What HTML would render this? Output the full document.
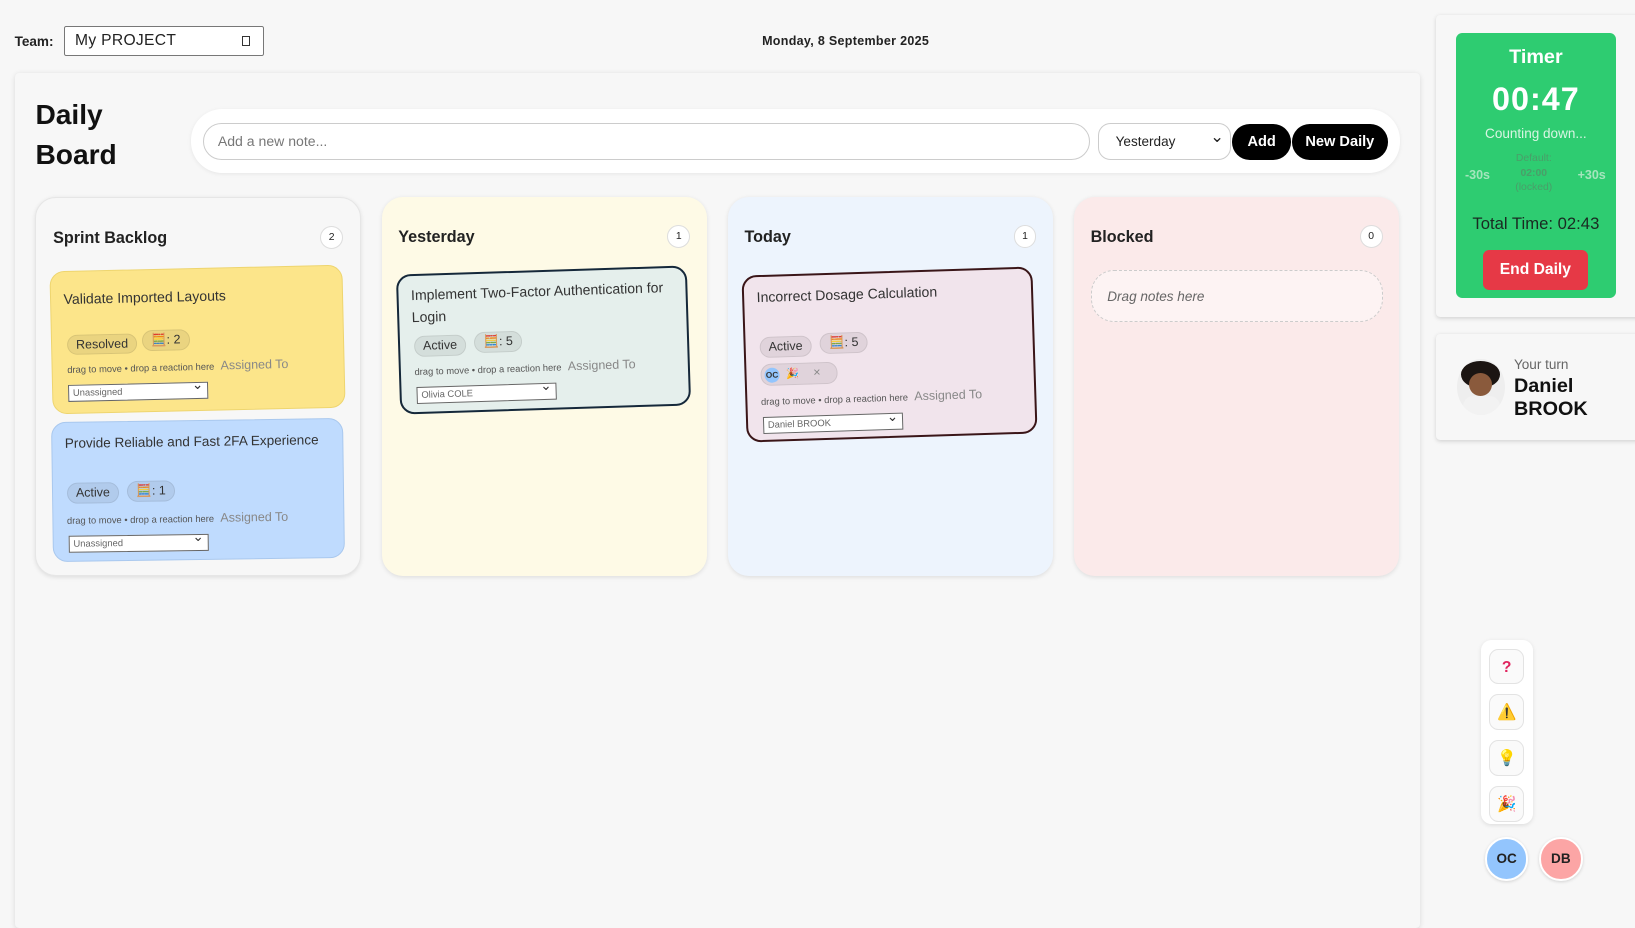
<!DOCTYPE html>
<html><head><meta charset="utf-8">
<style>
html{zoom:1.0427}
body{margin:0;width:1568px;height:859px;background:#f7f7f7;font-family:"Liberation Sans","DejaVu Sans",sans-serif;color:#222;position:relative;overflow:hidden}
.a{position:absolute}
.sel{background:#fff;border:1px solid #777;box-sizing:border-box}
.col{position:absolute;top:189px;width:312px;height:363px;border-radius:20px;box-shadow:0 1px 4px rgba(0,0,0,.1);box-sizing:border-box}
.ch{position:absolute;top:30px;left:16px;font-size:15.5px;font-weight:bold;color:#222}
.cnt{position:absolute;top:27px;right:16px;width:22px;height:22px;border-radius:50%;background:#fff;border:1px solid #ddd;font-size:10px;text-align:center;line-height:21px;box-sizing:border-box}
.card{position:absolute;border-radius:14px;box-sizing:border-box;font-size:13.5px;color:#333}
.card .t{position:absolute;left:12px;top:16px;right:10px;line-height:21px}
.chip{position:absolute;height:20px;border-radius:10px;background:rgba(0,0,0,.07);border:1px solid rgba(0,0,0,.08);font-size:12px;line-height:19px;padding:0 8px;box-sizing:border-box;color:#333}
.hint{position:absolute;font-size:9px;color:#555;white-space:nowrap}
.hint span{font-size:12px;color:#888;margin-left:6px}
.cs{position:absolute;height:17px;background:#fff;border:1px solid #666;font-size:9px;color:#666;line-height:15px;padding-left:4px;box-sizing:border-box}
.cs:after{content:"⌄";position:absolute;right:4px;top:-5px;font-size:13px;color:#333}
.rb{position:absolute;left:8px;width:34px;height:34px;border:1px solid #e3e3e3;border-radius:9px;background:#fafafa;text-align:center;line-height:34px;font-size:15px;box-sizing:border-box}
</style></head><body>
<div class="a" style="left:14px;top:33px;font-size:13px;font-weight:bold">Team:</div>
<div class="a sel" style="left:61px;top:25px;width:192px;height:29px;border-radius:2px;font-size:15px;padding:5px 10px;letter-spacing:.3px">My PROJECT<span class="a" style="right:12px;top:9px;width:6px;height:7px;border:1px solid #333"></span></div>
<div class="a" style="left:700px;top:33px;width:222px;text-align:center;font-size:12px;font-weight:bold;letter-spacing:.3px">Monday, 8 September 2025</div>

<div class="a" style="left:14px;top:70px;width:1348px;height:820px;background:#f7f7f7;box-shadow:0 1px 5px rgba(0,0,0,.12);border-radius:4px"></div>
<div class="a" style="left:34px;top:91px;font-size:27px;font-weight:bold;line-height:38px;color:#111">Daily<br>Board</div>
<div class="a" style="left:183px;top:105px;width:1160px;height:61px;background:#fff;border-radius:30px;box-shadow:0 1px 4px rgba(0,0,0,.07)"></div>
<div class="a" style="left:195px;top:118px;width:850px;height:35px;border:1px solid #ccc;border-radius:18px;box-sizing:border-box;font-size:13.5px;color:#777;padding:9px 13px">Add a new note...</div>
<div class="a" style="left:1053px;top:118px;width:128px;height:35px;border:1px solid #ccc;border-radius:12px;box-sizing:border-box;font-size:13px;color:#222;padding:10px 16px">Yesterday<span class="a" style="right:6px;top:3px;font-size:16px">⌄</span></div>
<div class="a" style="left:1182px;top:119px;width:56px;height:34px;background:#000;color:#fff;border-radius:17px;font-size:14px;font-weight:bold;text-align:center;line-height:35px">Add</div>
<div class="a" style="left:1239px;top:119px;width:92px;height:34px;background:#000;color:#fff;border-radius:17px;font-size:14px;font-weight:bold;text-align:center;line-height:35px">New Daily</div>

<div class="col" style="left:34px;background:#f7f7f7;border:1px solid #e6e6e6"><div class="ch">Sprint Backlog</div><div class="cnt">2</div></div>
<div class="col" style="left:366px;background:#fefae6"><div class="ch">Yesterday</div><div class="cnt">1</div></div>
<div class="col" style="left:698px;background:#edf4fd"><div class="ch">Today</div><div class="cnt">1</div></div>
<div class="col" style="left:1030px;background:#fbeaea"><div class="ch">Blocked</div><div class="cnt">0</div>
<div class="a" style="left:16px;top:70px;width:280px;height:50px;border:1px dashed #ccc;border-radius:22px;background:#fdf3f3;box-sizing:border-box;font-size:13px;font-style:italic;color:#666;padding:17px 15px">Drag notes here</div></div>

<div class="card" style="left:49px;top:257px;width:281px;height:137px;background:#fce58a;border:1px solid #eed56f;transform:rotate(-1.3deg)">
<div class="t">Validate Imported Layouts</div>
<div class="chip" style="left:14px;top:60px">Resolved</div><div class="chip" style="left:86px;top:58px">🧮: 2</div>
<div class="hint" style="left:14px;top:86px">drag to move • drop a reaction here<span>Assigned To</span></div>
<div class="cs" style="left:14px;top:108px;width:135px">Unassigned</div></div>

<div class="card" style="left:50px;top:403px;width:280px;height:134px;background:#bfdbfe;border:1px solid #a9c8ee;transform:rotate(-.8deg)">
<div class="t" style="top:10px;font-size:13px;white-space:nowrap">Provide Reliable and Fast 2FA Experience</div>
<div class="chip" style="left:13px;top:58px">Active</div><div class="chip" style="left:71px;top:57px">🧮: 1</div>
<div class="hint" style="left:13px;top:86px">drag to move • drop a reaction here<span>Assigned To</span></div>
<div class="cs" style="left:14px;top:108px;width:135px">Unassigned</div></div>

<div class="card" style="left:382px;top:259px;width:279px;height:134px;background:#e5efec;border:2px solid #15283a;transform:rotate(-1.8deg)">
<div class="t" style="top:9px">Implement Two-Factor Authentication for Login</div>
<div class="chip" style="left:13px;top:58px">Active</div><div class="chip" style="left:71px;top:56px">🧮: 5</div>
<div class="hint" style="left:13px;top:84px">drag to move • drop a reaction here<span>Assigned To</span></div>
<div class="cs" style="left:14px;top:106px;width:135px">Olivia COLE</div></div>

<div class="card" style="left:714px;top:260px;width:279px;height:160px;background:#f1e4ec;border:2px solid #3a1518;transform:rotate(-1.8deg)">
<div class="t" style="top:10px">Incorrect Dosage Calculation</div>
<div class="chip" style="left:13px;top:58px">Active</div><div class="chip" style="left:71px;top:56px">🧮: 5</div>
<div class="chip" style="left:13px;top:83px;width:74px;height:22px"><span class="a" style="left:3px;top:3px;width:15px;height:15px;border-radius:50%;background:#93c5fd;font-size:8px;font-weight:bold;line-height:15px;text-align:center">OC</span><span class="a" style="left:24px;top:1px;font-size:10px">🎉</span><span class="a" style="left:50px;top:0;color:#888">×</span></div>
<div class="hint" style="left:13px;top:112px">drag to move • drop a reaction here<span>Assigned To</span></div>
<div class="cs" style="left:14px;top:134px;width:135px">Daniel BROOK</div></div>

<div class="a" style="left:1377px;top:14px;width:200px;height:290px;background:#f7f7f7;box-shadow:0 1px 4px rgba(0,0,0,.15);border-radius:4px"></div>
<div class="a" style="left:1396px;top:32px;width:154px;height:254px;background:#2ecc71;border-radius:6px;color:#fff;text-align:center">
<div class="a" style="left:0;right:0;top:12px;font-size:19px;font-weight:bold">Timer</div>
<div class="a" style="left:0;right:0;top:46px;font-size:31px;font-weight:bold;letter-spacing:1px">00:47</div>
<div class="a" style="left:0;right:0;top:89px;font-size:13px;color:#d8f5e3">Counting down...</div>
<div class="a" style="left:9px;top:129px;font-size:12px;font-weight:bold;color:#a5e5bd">-30s</div>
<div class="a" style="left:50px;width:50px;top:114px;font-size:10px;line-height:14px;color:#4a9e69">Default:<br><b>02:00</b><br>(locked)</div>
<div class="a" style="right:10px;top:129px;font-size:12px;font-weight:bold;color:#a5e5bd">+30s</div>
<div class="a" style="left:0;right:0;top:173px;font-size:16px;color:#1a2a22">Total Time: 02:43</div>
<div class="a" style="left:26px;top:208px;width:101px;height:38px;background:#e63946;border-radius:6px;font-size:15px;font-weight:bold;line-height:38px">End Daily</div></div>

<div class="a" style="left:1377px;top:320px;width:200px;height:102px;background:#f7f7f7;box-shadow:0 1px 4px rgba(0,0,0,.15);border-radius:4px">
<div class="a" style="left:20px;top:24px;width:46px;height:54px;border-radius:50%;background:#eee;overflow:hidden"><div class="a" style="left:4px;top:2px;width:38px;height:26px;border-radius:50%;background:#1b1512"></div><div class="a" style="left:12px;top:14px;width:22px;height:22px;border-radius:50%;background:#8a5a3c"></div><div class="a" style="left:6px;top:36px;width:36px;height:22px;border-radius:10px;background:#f2f2f2"></div></div>
<div class="a" style="left:75px;top:22px;font-size:13px;color:#666">Your turn</div>
<div class="a" style="left:75px;top:40px;font-size:19px;font-weight:bold;line-height:22px;color:#111">Daniel<br>BROOK</div></div>

<div class="a" style="left:1420px;top:614px;width:50px;height:176px;background:#fff;border-radius:10px;box-shadow:0 1px 4px rgba(0,0,0,.1)">
<div class="rb" style="top:8px;color:#e0245e;font-weight:bold">?</div>
<div class="rb" style="top:52px">⚠️</div>
<div class="rb" style="top:96px">💡</div>
<div class="rb" style="top:140px">🎉</div></div>
<div class="a" style="left:1424px;top:803px;width:38px;height:38px;border-radius:50%;background:#93c5fd;border:2px solid #fff;box-shadow:0 1px 3px rgba(0,0,0,.15);font-size:13px;font-weight:bold;text-align:center;line-height:38px">OC</div>
<div class="a" style="left:1476px;top:803px;width:38px;height:38px;border-radius:50%;background:#fca5a5;border:2px solid #fff;box-shadow:0 1px 3px rgba(0,0,0,.15);font-size:13px;font-weight:bold;text-align:center;line-height:38px">DB</div>
</body></html>
